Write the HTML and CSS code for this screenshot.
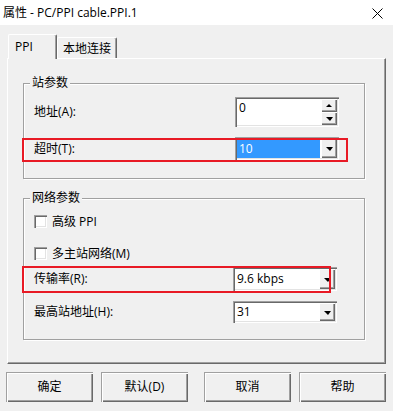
FILE: index.html
```html
<!DOCTYPE html>
<html lang="zh-CN">
<head>
<meta charset="utf-8">
<title>属性 - PC/PPI cable.PPI.1</title>
<link rel="stylesheet" href="styles.css">
</head>
<body>
<div class="titlebar">
  <span class="title">属性 - PC/PPI cable.PPI.1</span>
  <svg class="close" width="11" height="11" viewBox="0 0 11 11"><path d="M0.5 0.5 L10.5 10.5 M10.5 0.5 L0.5 10.5" stroke="#000" stroke-width="1" fill="none"/></svg>
</div>
<div class="client">
  <div class="tabs">
    <div class="tab tab-active">PPI</div>
    <div class="tab tab-inactive">本地连接</div>
  </div>
  <div class="panel">
    <div class="group group-station">
      <span class="legend">站参数</span>
      <div class="row row-spin">
        <span class="label">地址(A):</span>
        <div class="field spin">
          <span class="value">0</span>
          <div class="spin-btns">
            <div class="btn3d small-btn"><span class="arrow-up"></span></div>
            <div class="btn3d small-btn"><span class="arrow-down"></span></div>
          </div>
        </div>
      </div>
      <div class="row row-timeout">
        <span class="label">超时(T):</span>
        <div class="field combo">
          <span class="value selected">10</span>
          <div class="btn3d drop-btn"><span class="arrow-down"></span></div>
        </div>
      </div>
      <div class="mark mark-timeout"></div>
    </div>
    <div class="group group-network">
      <span class="legend">网络参数</span>
      <div class="row row-check row-check1">
        <span class="checkbox"></span>
        <span class="check-label">高级 PPI</span>
      </div>
      <div class="row row-check row-check2">
        <span class="checkbox"></span>
        <span class="check-label">多主站网络(M)</span>
      </div>
      <div class="row row-rate">
        <span class="label">传输率(R):</span>
        <div class="field combo net-combo">
          <span class="value">9.6 kbps</span>
          <div class="btn3d drop-btn"><span class="arrow-down"></span></div>
        </div>
      </div>
      <div class="row row-max">
        <span class="label">最高站地址(H):</span>
        <div class="field combo net-combo">
          <span class="value">31</span>
          <div class="btn3d drop-btn"><span class="arrow-down"></span></div>
        </div>
      </div>
      <div class="mark mark-rate"></div>
    </div>
  </div>
  <div class="buttons">
    <div class="btn3d button">确定</div>
    <div class="btn3d button">默认(D)</div>
    <div class="btn3d button button-gap">取消</div>
    <div class="btn3d button">帮助</div>
  </div>
</div>
</body>
</html>
```

FILE: styles.css
```css
* { box-sizing: border-box; }
html, body { margin: 0; padding: 0; }
body {
  width: 393px;
  height: 411px;
  overflow: hidden;
  background: #f0f0f0;
  font-family: "Open Sans", "Noto Sans CJK SC", "Microsoft YaHei", sans-serif;
  font-size: 12px;
  line-height: 16px;
  color: #000;
}

.titlebar {
  height: 25px;
  background: #fff;
  display: flex;
  align-items: center;
  padding-left: 3px;
}
.title { flex: 1; }
.close { margin-right: 10px; margin-top: 1px; display: block; }

.client { padding: 9px 0 0 7px; }

.tabs {
  display: flex;
  align-items: flex-start;
  height: 24px;
  padding-left: 1px;
  position: relative;
  z-index: 1;
}
.tab {
  background: #f0f0f0;
  border-top: 1px solid #fff;
  border-left: 1px solid #fff;
  border-right: 1px solid #696969;
  box-shadow: inset -1px 0 #a0a0a0;
  border-radius: 2px 2px 0 0;
}
.tab-active {
  width: 49px;
  height: 25px;
  padding: 4px 0 0 6px;
}
.tab-inactive {
  width: 60px;
  height: 21px;
  margin-top: 3px;
  padding: 3px 0 0 5px;
}

.panel {
  width: 379px;
  height: 306px;
  border-top: 1px solid #fff;
  border-left: 1px solid #fff;
  border-right: 1px solid #696969;
  border-bottom: 1px solid #696969;
  box-shadow: inset -1px -1px #a0a0a0;
  padding: 24px 0 0 15px;
}

.group {
  position: relative;
  width: 342px;
  border: 1px solid #a0a0a0;
  box-shadow: inset 1px 1px #fff, 1px 1px #fff;
}
.group-station { height: 96px; padding-top: 13px; }
.group-network { height: 142px; margin-top: 19px; padding-top: 16px; }

.legend {
  position: absolute;
  left: 6px;
  top: -9px;
  padding: 0 2px;
  background: #f0f0f0;
}

.row {
  display: flex;
  align-items: center;
  padding-left: 10px;
}
.label { flex: 1; }
.row-spin { height: 30px; padding-right: 25px; }
.row-timeout { height: 23px; margin-top: 10px; padding-right: 25px; }
.row-check { height: 13px; }
.row-check2 { margin-top: 19px; }
.row-rate { height: 24px; margin-top: 7px; padding-right: 27px; }
.row-max { height: 22px; margin-top: 10px; padding-right: 27px; }

.field {
  width: 104px;
  height: 100%;
  background: #fff;
  padding: 2px;
  display: flex;
  box-shadow: inset 1px 1px #a0a0a0, inset 2px 2px #696969, inset -1px -1px #fff, inset -2px -2px #e3e3e3;
}
.value {
  flex: 1;
  display: flex;
  align-items: center;
  padding-left: 2px;
}
.spin .value { align-items: flex-start; padding-top: 1px; }
.selected {
  background: #3399ff;
  color: #fff;
  margin-right: 1px;
}

.btn3d {
  background: #f0f0f0;
  box-shadow: inset 1px 1px #fff, inset -1px -1px #696969, inset -2px -2px #a0a0a0;
}
.spin-btns {
  width: 16px;
  display: flex;
  flex-direction: column;
}
.small-btn {
  flex: 1;
  display: flex;
  align-items: center;
  justify-content: center;
}
.drop-btn {
  width: 16px;
  display: flex;
  align-items: center;
  justify-content: center;
}
.arrow-down {
  width: 0;
  height: 0;
  border-left: 4px solid transparent;
  border-right: 3px solid transparent;
  border-top: 4px solid #000;
  margin-top: 1px;
}
.arrow-up {
  width: 0;
  height: 0;
  border-left: 3px solid transparent;
  border-right: 3px solid transparent;
  border-bottom: 3px solid #000;
}

.checkbox {
  width: 13px;
  height: 13px;
  background: #fff;
  box-shadow: inset 1px 1px #a0a0a0, inset 2px 2px #696969, inset -1px -1px #fff, inset -2px -2px #e3e3e3;
}
.check-label { margin-left: 5px; }

.mark {
  position: absolute;
  border: 2px solid #e81a25;
  pointer-events: none;
}
.mark-timeout { left: -2px; top: 54px; width: 326px; height: 24px; }
.mark-rate { left: -2px; top: 67px; width: 309px; height: 27px; }

.buttons {
  display: flex;
  margin: 8px 0 0 -1px;
  gap: 8px;
}
.button {
  width: 87px;
  height: 30px;
  display: flex;
  align-items: center;
  justify-content: center;
  box-shadow: inset 1px 1px #a0a0a0, inset 2px 2px #fff, inset -1px -1px #696969, inset -2px -2px #a0a0a0;
}
.button-gap { margin-left: 8px; }
```
